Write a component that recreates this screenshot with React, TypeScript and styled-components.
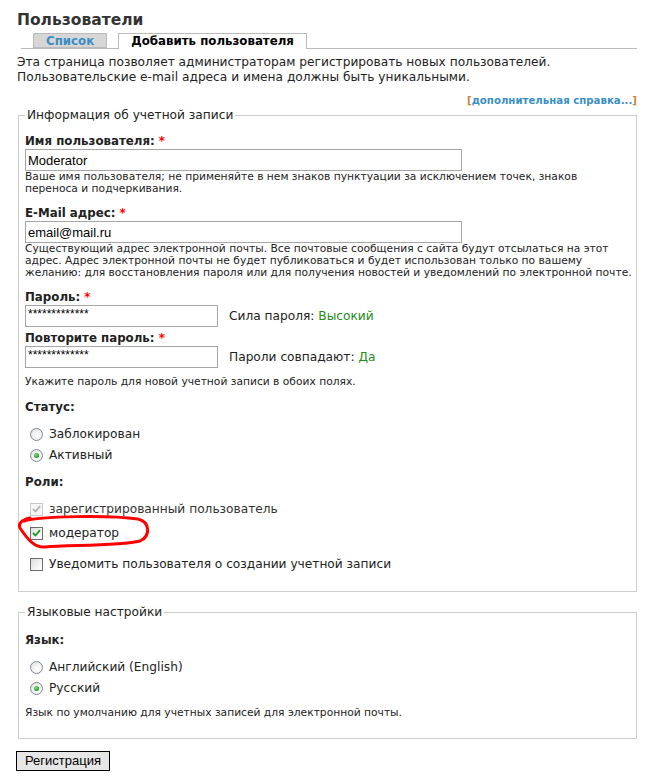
import React from "react";
import styled, { createGlobalStyle } from "styled-components";

const Global = createGlobalStyle`
  html, body { margin: 0; padding: 0; background: #fff; }
  body {
    font-family: "DejaVu Sans", Verdana, sans-serif;
    color: #222;
    font-size: 12.2px;
  }
`;

const Page = styled.div`
  width: 650px;
  box-sizing: border-box;
  padding: 10px 13px 0 17px;
`;

const Title = styled.h1`
  margin: 0;
  font-size: 15.5px;
  line-height: 20px;
  font-weight: bold;
  color: #333;
`;

const TabBar = styled.div`
  display: flex;
  align-items: flex-end;
  gap: 11px;
  margin: 3px 0 0 4px;
  padding-left: 12px;
  border-bottom: 1px solid #bbb;
  height: 15px;
`;

const Tab = styled.div<{ $active?: boolean }>`
  box-sizing: border-box;
  height: ${(p) => (p.$active ? 16 : 15)}px;
  margin-bottom: ${(p) => (p.$active ? -1 : 0)}px;
  padding: 0 12px;
  border: 1px solid #bbb;
  border-bottom: ${(p) => (p.$active ? "none" : "1px solid #bbb")};
  background: ${(p) => (p.$active ? "#fff" : "#d6d6d6")};
  color: ${(p) => (p.$active ? "#000" : "#3b8fc4")};
  font-weight: bold;
  font-size: 11.8px;
  line-height: 14px;
`;

const Intro = styled.p`
  margin: 6px 0 0;
  line-height: 15px;
`;

const HelpRow = styled.div`
  margin-top: 9px;
  text-align: right;
  font-size: 10.2px;
  line-height: 14px;
  font-weight: bold;
`;

const Bracket = styled.span`
  color: #c9853a;
`;

const HelpLink = styled.a`
  color: #3b8fc4;
  text-decoration: none;
`;

const Fieldset = styled.fieldset<{ $bottom: number }>`
  margin: 0 0 0 1px;
  padding: 0 6px ${(p) => p.$bottom}px;
  border: 1px solid #ccc;
  min-width: 0;
`;

const Legend = styled.legend`
  padding: 0 2px;
  margin-left: 0;
  font-size: 12.2px;
  line-height: 15px;
`;

const Label = styled.div<{ $top: number }>`
  margin-top: ${(p) => p.$top}px;
  font-weight: bold;
  font-size: 11.8px;
  line-height: 15px;
`;

const Req = styled.span`
  color: #f00;
`;

const TextInput = styled.input<{ $w: number }>`
  display: block;
  box-sizing: border-box;
  width: ${(p) => p.$w}px;
  height: 22px;
  margin: 0;
  padding: 0 2px;
  border: 1px solid #a6a6a6;
  font-family: "Liberation Sans", Arial, sans-serif;
  font-size: 13px;
  color: #000;
  background: #fff;
  outline: none;
`;

const PassInput = styled(TextInput)`
  font-size: 12px;
  padding-bottom: 5px;
`;

const Desc = styled.div<{ $top?: number }>`
  margin-top: ${(p) => p.$top ?? 0}px;
  font-size: 10.7px;
  line-height: 12px;
  color: #222;
  white-space: nowrap;
`;

const PassRow = styled.div`
  display: flex;
  align-items: center;
  gap: 11px;
`;

const Hint = styled.span`
  line-height: 15px;
`;

const Good = styled.span`
  color: #238c23;
`;

const OptionList = styled.div<{ $top: number; $row: number }>`
  margin-top: ${(p) => p.$top}px;
  display: flex;
  flex-direction: column;
  & > * {
    height: ${(p) => p.$row}px;
  }
`;

const Option = styled.div`
  position: relative;
  display: flex;
  align-items: center;
  padding-left: 5px;
  gap: 6px;
  line-height: 15px;
`;

const RadioMark = styled.span<{ $checked?: boolean }>`
  position: relative;
  box-sizing: border-box;
  width: 13px;
  height: 13px;
  border-radius: 50%;
  border: 1px solid #7f8a94;
  background: radial-gradient(circle at 60% 60%, #fff 0%, #f2f2f2 45%, #d8d8d8 100%);
  flex: none;
  &::after {
    content: "";
    display: ${(p) => (p.$checked ? "block" : "none")};
    position: absolute;
    left: 3px;
    top: 3px;
    width: 5px;
    height: 5px;
    border-radius: 50%;
    background: radial-gradient(circle at 40% 40%, #8fe08f 0%, #25a025 60%, #1a7a1a 100%);
  }
`;

const CheckMark = styled.span<{ $disabled?: boolean }>`
  display: flex;
  align-items: center;
  justify-content: center;
  box-sizing: border-box;
  width: 13px;
  height: 13px;
  border: 1px solid ${(p) => (p.$disabled ? "#c9c9c9" : "#6d6d6d")};
  background: ${(p) =>
    p.$disabled ? "#f6f6f6" : "linear-gradient(135deg, #dcdcdc 0%, #f4f4f4 60%, #fff 100%)"};
  flex: none;
`;

const Scribble = styled.svg`
  position: absolute;
  left: -10px;
  top: -11px;
  width: 140px;
  height: 42px;
  overflow: visible;
  pointer-events: none;
`;

const OptText = styled.span<{ $muted?: boolean }>`
  color: ${(p) => (p.$muted ? "#333" : "#222")};
`;

const Spacer = styled.div<{ $h: number }>`
  height: ${(p) => p.$h}px;
`;

const Submit = styled.button`
  display: block;
  margin: 12px 0 0 -1px;
  height: 20px;
  padding: 0 8px;
  border: 1px solid #000;
  background: #e6e6e6;
  font-family: "Liberation Sans", Arial, sans-serif;
  font-size: 13px;
  line-height: 16px;
  color: #000;
`;

const Check = ({ color }: { color: string }) => (
  <svg width="9" height="8" viewBox="0 0 9 8">
    <path d="M1 4 L3.5 6.5 L8 1.2" fill="none" stroke={color} strokeWidth="1.8" />
  </svg>
);

const Radio = ({ checked, label }: { checked?: boolean; label: string }) => (
  <Option>
    <RadioMark $checked={checked} />
    <OptText>{label}</OptText>
  </Option>
);

const CheckOption = ({
  checked,
  disabled,
  label,
  children,
}: {
  checked?: boolean;
  disabled?: boolean;
  label: string;
  children?: React.ReactNode;
}) => (
  <Option>
    <CheckMark $disabled={disabled}>
      {checked && <Check color={disabled ? "#b4b4b4" : "#1f9a1f"} />}
    </CheckMark>
    <OptText $muted={disabled}>{label}</OptText>
    {children}
  </Option>
);

export default function App() {
  return (
    <Page>
      <Global />
      <Title>Пользователи</Title>
      <TabBar>
        <Tab>Список</Tab>
        <Tab $active>Добавить пользователя</Tab>
      </TabBar>
      <Intro>
        Эта страница позволяет администраторам регистрировать новых пользователей.
        <br />
        Пользовательские e-mail адреса и имена должны быть уникальными.
      </Intro>
      <HelpRow>
        <Bracket>[</Bracket>
        <HelpLink href="#">дополнительная справка...</HelpLink>
        <Bracket>]</Bracket>
      </HelpRow>

      <Fieldset $bottom={15}>
        <Legend>Информация об учетной записи</Legend>
        <Label $top={11}>
          Имя пользователя: <Req>*</Req>
        </Label>
        <TextInput $w={437} readOnly value="Moderator" />
        <Desc>
          Ваше имя пользователя; не применяйте в нем знаков пунктуации за исключением точек, знаков
          <br />
          переноса и подчеркивания.
        </Desc>

        <Label $top={11}>
          E-Mail адрес: <Req>*</Req>
        </Label>
        <TextInput $w={437} readOnly value="email@mail.ru" />
        <Desc>
          Существующий адрес электронной почты. Все почтовые сообщения с сайта будут отсылаться на этот
          <br />
          адрес. Адрес электронной почты не будет публиковаться и будет использован только по вашему
          <br />
          желанию: для восстановления пароля или для получения новостей и уведомлений по электронной почте.
        </Desc>

        <Label $top={11}>
          Пароль: <Req>*</Req>
        </Label>
        <PassRow>
          <PassInput $w={193} readOnly value="*************" />
          <Hint>
            Сила пароля: <Good>Высокий</Good>
          </Hint>
        </PassRow>
        <Label $top={4}>
          Повторите пароль: <Req>*</Req>
        </Label>
        <PassRow>
          <PassInput $w={193} readOnly value="*************" />
          <Hint>
            Пароли совпадают: <Good>Да</Good>
          </Hint>
        </PassRow>
        <Desc $top={8}>Укажите пароль для новой учетной записи в обоих полях.</Desc>

        <Label $top={12}>Статус:</Label>
        <OptionList $top={9} $row={21}>
          <Radio label="Заблокирован" />
          <Radio checked label="Активный" />
        </OptionList>

        <Label $top={9}>Роли:</Label>
        <OptionList $top={7} $row={24}>
          <CheckOption checked disabled label="зарегистрированный пользователь" />
          <CheckOption checked label="модератор">
            <Scribble viewBox="0 0 140 42">
              <path
                d="M9 11 C25 6, 95 5, 123 9 C135 12, 136 26, 125 31 C105 36, 55 35, 30 37 C20 38, 13 30, 5 18 C3 14, 6 10, 15 8"
                fill="none"
                stroke="#f00"
                strokeWidth="3"
                strokeLinecap="round"
                strokeLinejoin="round"
              />
            </Scribble>
          </CheckOption>
        </OptionList>
        <OptionList $top={7} $row={24}>
          <CheckOption label="Уведомить пользователя о создании учетной записи" />
        </OptionList>
      </Fieldset>

      <Spacer $h={13} />

      <Fieldset $bottom={19}>
        <Legend>Языковые настройки</Legend>
        <Label $top={13}>Язык:</Label>
        <OptionList $top={9} $row={21}>
          <Radio label="Английский (English)" />
          <Radio checked label="Русский" />
        </OptionList>
        <Desc $top={8}>Язык по умолчанию для учетных записей для электронной почты.</Desc>
      </Fieldset>

      <Submit>Регистрация</Submit>
    </Page>
  );
}
